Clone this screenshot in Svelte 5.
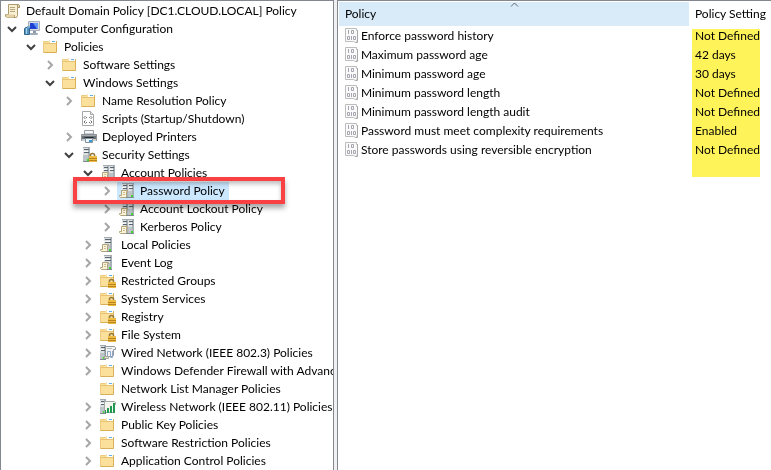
<script>
  let nodes = $state([
    { level: 0, icon: 'scroll', label: 'Default Domain Policy [DC1.CLOUD.LOCAL] Policy' },
    { level: 1, icon: 'computer', label: 'Computer Configuration', open: true },
    { level: 2, icon: 'folder', label: 'Policies', open: true },
    { level: 3, icon: 'folder', label: 'Software Settings', open: false },
    { level: 3, icon: 'folder', label: 'Windows Settings', open: true },
    { level: 4, icon: 'folder', label: 'Name Resolution Policy', open: false },
    { level: 4, icon: 'script', label: 'Scripts (Startup/Shutdown)' },
    { level: 4, icon: 'printer', label: 'Deployed Printers', open: false },
    { level: 4, icon: 'security', label: 'Security Settings', open: true },
    { level: 5, icon: 'servers', label: 'Account Policies', open: true },
    { level: 6, icon: 'servers', label: 'Password Policy', open: false, marked: true },
    { level: 6, icon: 'servers', label: 'Account Lockout Policy', open: false },
    { level: 6, icon: 'servers', label: 'Kerberos Policy', open: false },
    { level: 5, icon: 'server', label: 'Local Policies', open: false },
    { level: 5, icon: 'server', label: 'Event Log', open: false },
    { level: 5, icon: 'lockedFolder', label: 'Restricted Groups', open: false },
    { level: 5, icon: 'lockedFolder', label: 'System Services', open: false },
    { level: 5, icon: 'lockedFolder', label: 'Registry', open: false },
    { level: 5, icon: 'lockedFolder', label: 'File System', open: false },
    { level: 5, icon: 'wired', label: 'Wired Network (IEEE 802.3) Policies', open: false },
    { level: 5, icon: 'folder', label: 'Windows Defender Firewall with Advanced Security', open: false },
    { level: 5, icon: 'folder', label: 'Network List Manager Policies' },
    { level: 5, icon: 'wireless', label: 'Wireless Network (IEEE 802.11) Policies', open: false },
    { level: 5, icon: 'folder', label: 'Public Key Policies', open: false },
    { level: 5, icon: 'folder', label: 'Software Restriction Policies', open: false },
    { level: 5, icon: 'folder', label: 'Application Control Policies', open: false }
  ]);

  let selected = $state('Password Policy');

  const policies = [
    { name: 'Enforce password history', setting: 'Not Defined' },
    { name: 'Maximum password age', setting: '42 days' },
    { name: 'Minimum password age', setting: '30 days' },
    { name: 'Minimum password length', setting: 'Not Defined' },
    { name: 'Minimum password length audit', setting: 'Not Defined' },
    { name: 'Password must meet complexity requirements', setting: 'Enabled' },
    { name: 'Store passwords using reversible encryption', setting: 'Not Defined' }
  ];

  // skip everything below a closed node
  let visible = $derived.by(() => {
    let closedAt = Infinity;
    return nodes.filter((node) => {
      if (node.level > closedAt) return false;
      closedAt = node.open === false ? node.level : Infinity;
      return true;
    });
  });
</script>

{#snippet folder()}
  <path d="M1 3h5l1-2h6v12H1z" fill="#fae09a" />
  <path d="M.5 13.5v-11h5l1-1" fill="none" stroke="#eccb80" />
  <path d="M7 1h6v3H7z" fill="#fff" />
  <path d="M9 2.5h3" stroke="#5fb0e6" />
  <path d="M1 4.5h12" stroke="#e6c273" />
  <path d="M13.5 2v11.5H.5" fill="none" stroke="#d9b055" />
{/snippet}

{#snippet lock()}
  <path d="M9.5 9V7.500a2.500 2.500 0 0 1 4 0V9" fill="none" stroke="#94783c" stroke-width="1.500" />
  <path d="M8 9h8v6H8z" fill="#eebc42" />
  <path d="M8 11.500h8M8 13.500h8" stroke="#b98420" />
{/snippet}

{#snippet tower(x, w)}
  <g transform="translate({x} 0)">
    <path d="M0 0h{w}v14H0z" fill="#dce0e2" />
    <path d="M{w - 2} 0h2v14h-2z" fill="#a7b0b6" />
    <path d="M0 .5h{w}" stroke="#a3abb0" />
    <path d="M1 2.500h{w - 2}M1 5.500h{w - 2}" stroke="#59646b" />
    <path d="M0 4.500h{w - 2}" stroke="#f8fafa" />
    <path d="M0 8h{w - 2}v6H0z" fill="#bcc4c8" />
    <path d="M0 14.500h{w}" stroke="#7f8a90" />
    <path d="M{w - 3} 12h2v2h-2z" fill="#43d62f" />
  </g>
{/snippet}

{#snippet smallScroll()}
  <path d="M2.500 7.500h6v1h-1v5l-1 1h-5l-1-1v-1h2z" fill="#faf3dc" stroke="#b3a27a" />
  <path d="M4 9.500h2M4 11.500h2" stroke="#cdbd8f" />
{/snippet}

{#snippet icon(kind)}
  <svg class="icon" viewBox="0 0 16 16" width="16" height="16" aria-hidden="true">
    {#if kind === 'scroll'}
      <path d="M3.500 1.500h10l1 1v2h-2v8l-1 2h-9l-2-1v-2h3z" fill="#f8efd5" stroke="#ab9a70" />
      <path d="M12.500 1.500v3h2v-2l-1-1z" fill="#dfcb9c" stroke="#ab9a70" />
      <path d="M1 11.500h8v3H2l-1-1z" fill="#e4d2a6" />
      <path d="M5 4.500h5M5 6.500h5M5 8.500h5M9.500 12v2" stroke="#b8a679" />
    {:else if kind === 'computer'}
      <path d="M4.500.5h11v9h-11z" fill="#d6dce2" stroke="#a8b2bd" />
      <path d="M6 2h8v6H6z" fill="#1c3fd1" />
      <path d="M9 2h5v6h-1z" fill="#6396f5" />
      <path d="M9 10h3v2H9z" fill="#8d98a5" />
      <path d="M6.500 12.500h7v1h-7z" fill="#d4dbe1" stroke="#a0acb8" />
      <path d="M.5 7.500l1-1h4v7h-5z" fill="#5691bd" stroke="#326486" />
      <path d="M2.500 7v6" stroke="#a9d6ef" />
      <path d="M3 5h3v2H3z" fill="#77abd0" />
    {:else if kind === 'folder'}
      {@render folder()}
    {:else if kind === 'script'}
      <path d="M1.500.5h8l3 3v11h-11z" fill="#fff" stroke="#a6a6a6" />
      <path d="M9.500.5v3h3" fill="#e7e7e7" stroke="#a6a6a6" />
      <path d="M4.500 5L3 6.500 4.500 8M9.500 5L11 6.500 9.500 8M5 6.500h1M8 6.500h1M4.500 9.500L3 11l1.500 1.500M9.500 9.500L11 11l-1.500 1.500M5 11.500h1M8 11.500h1" fill="none" stroke="#707070" />
    {:else if kind === 'printer'}
      <path d="M3.500 5V1.500h9V5z" fill="#f7f8f9" stroke="#969b9f" />
      <path d="M.5 5.500h15v6H.5z" fill="#6b7176" stroke="#8b9196" />
      <path d="M1 6.500h14" stroke="#a5abb0" />
      <path d="M1 10h14v2H1z" fill="#cbd0d3" />
      <path d="M3.500 8.500h9" stroke="#252a2e" />
      <path d="M4.500 9.500h7v4h-7z" fill="#ebf6fc" stroke="#85939d" />
      <path d="M8 11h3v2H8z" fill="#3d9ad5" />
    {:else if kind === 'security'}
      {@render tower(2, 7)}
      {@render lock()}
    {:else if kind === 'servers'}
      {@render tower(3, 6)}
      {@render tower(9, 6)}
      {@render smallScroll()}
    {:else if kind === 'server'}
      {@render tower(4, 8)}
      {@render smallScroll()}
    {:else if kind === 'lockedFolder'}
      {@render folder()}
      {@render lock()}
    {:else if kind === 'wired'}
      {@render tower(0, 6)}
      <path d="M5.500 1.500h9l1 1v2h-2v6l-1 1h-7z" fill="#f2f3f2" stroke="#939b9f" />
      <path d="M7 3.500h5" stroke="#b5bcc0" />
      <path d="M7.500 12V6.500h3v6h2V6" fill="none" stroke="#8fa9cb" />
      <path d="M4.500 11.500h4v2h-4z" fill="#e6dfcb" stroke="#a5a79f" />
    {:else if kind === 'wireless'}
      {@render tower(0, 6)}
      <path d="M4.500 2.500h10l1 1v2h-1v8h-10z" fill="#f5f5ef" stroke="#a6aaa7" />
      <path d="M5 11h1v3H5zM7 9h2v5H7zM10 7h2v7h-2zM13 4h2v10h-2z" fill="#219a51" />
    {:else if kind === 'binary'}
      <path d="M.5.5h11v2h1v9l-1 3h-1l-2-1h-8z" fill="#fafafa" stroke="#bdbdbd" />
      <path d="M12.500 2v12.500h-2" fill="none" stroke="#a8a8a8" />
      <path d="M3.500 2v4M6.500 2.500h2v3h-2zM2.500 8.500h2v3h-2zM6.500 8v4M8.500 8.500h2v3h-2z" fill="none" stroke="#a6a6b0" />
    {/if}
  </svg>
{/snippet}

<div class="console">
  <nav class="tree" aria-label="Policy tree">
    <ul>
      {#each visible as node (node.label)}
        <li style:padding-left="{node.level ? 4 + (node.level - 1) * 19 : 2}px">
          {#if node.level > 0}
            {#if node.open === undefined}
              <span class="toggle"></span>
            {:else}
              <button
                class="toggle"
                class:open={node.open}
                aria-label="Toggle {node.label}"
                aria-expanded={node.open}
                onclick={() => (node.open = !node.open)}
              >
                <svg viewBox="0 0 10 10" width="10" height="10" aria-hidden="true">
                  {#if node.open}
                    <path d="M1 3l4 4 4-4" />
                  {:else}
                    <path d="M3 1l4 4-4 4" />
                  {/if}
                </svg>
              </button>
            {/if}
          {/if}
          <button
            class="node"
            class:selected={selected === node.label}
            onclick={() => (selected = node.label)}
          >
            {@render icon(node.icon)}
            <span>{node.label}</span>
          </button>
          {#if node.marked}
            <div class="marker"></div>
          {/if}
        </li>
      {/each}
    </ul>
  </nav>

  <main class="details">
    <table>
      <thead>
        <tr>
          <th class="sorted" aria-sort="ascending">
            Policy
            <svg class="caret" viewBox="0 0 9 5" width="9" height="5" aria-hidden="true">
              <path d="M1 4.500l3.500-3.500 3.500 3.500" />
            </svg>
          </th>
          <th class="setting">Policy Setting</th>
        </tr>
      </thead>
      <tbody>
        {#each policies as policy}
          <tr>
            <td>
              <div class="policy">
                {@render icon('binary')}
                <span>{policy.name}</span>
              </div>
            </td>
            <td class="setting">{policy.setting}</td>
          </tr>
        {/each}
      </tbody>
    </table>
    <div class="highlight"></div>
  </main>
</div>

<style>
  :global(body) {
    margin: 0;
    background: #f0f0f0;
  }
  .console {
    display: grid;
    grid-template-columns: minmax(0, 10fr) minmax(0, 13fr);
    gap: 3px;
    min-height: 100vh;
    font-family: "Segoe UI", Lato, "Open Sans", sans-serif;
    font-size: 12px;
    color: #000;
  }
  .tree,
  .details {
    box-sizing: border-box;
    background: #fff;
    border-top: 1px solid #828790;
    border-left: 1px solid #828790;
    overflow: hidden;
  }
  .tree {
    border-right: 1px solid #828790;
    padding-top: 1px;
  }
  ul {
    list-style: none;
    margin: 0;
    padding: 0;
  }
  li {
    position: relative;
    display: flex;
    height: 18px;
    white-space: nowrap;
  }
  button {
    margin: 0;
    padding: 0;
    border: none;
    background: none;
    color: inherit;
    font: inherit;
  }
  .toggle {
    flex: none;
    width: 14px;
    margin-right: 3px;
    display: flex;
    align-items: center;
    justify-content: center;
  }
  .toggle path {
    fill: none;
    stroke: #a6a6a6;
    stroke-width: 2;
  }
  .toggle.open path {
    stroke: #404040;
  }
  .node {
    flex: none;
    display: flex;
    align-items: center;
    gap: 5px;
    padding: 0 4px 0 2px;
    line-height: 18px;
  }
  .node.selected {
    background: #cce8ff;
  }
  .icon {
    flex: none;
    display: block;
  }
  .marker {
    position: absolute;
    z-index: 1;
    top: -5px;
    left: 72px;
    right: 48px;
    height: 19px;
    border: 4px solid #f94144;
    box-shadow: 0 4px 5px rgba(0, 0, 0, 0.35), inset 0 3px 4px rgba(0, 0, 0, 0.25);
    pointer-events: none;
  }
  .details {
    position: relative;
    padding: 1px 0 0 1px;
  }
  table {
    width: 100%;
    table-layout: fixed;
    border-collapse: collapse;
  }
  th,
  td {
    padding: 0 0 0 6px;
    font-weight: normal;
    text-align: left;
    white-space: nowrap;
  }
  th {
    height: 24px;
    line-height: 24px;
  }
  td {
    height: 19px;
    line-height: 18px;
  }
  .setting {
    width: 76px;
  }
  .sorted {
    position: relative;
    background: #d9ebf9;
  }
  .caret {
    position: absolute;
    top: 0;
    left: calc(50% - 4px);
  }
  .caret path {
    fill: none;
    stroke: #5c6670;
  }
  .policy {
    display: flex;
    align-items: center;
  }
  .highlight {
    position: absolute;
    top: 28px;
    right: 11px;
    width: 68px;
    height: 148px;
    background: #fff35a;
    mix-blend-mode: multiply;
    pointer-events: none;
  }
</style>
